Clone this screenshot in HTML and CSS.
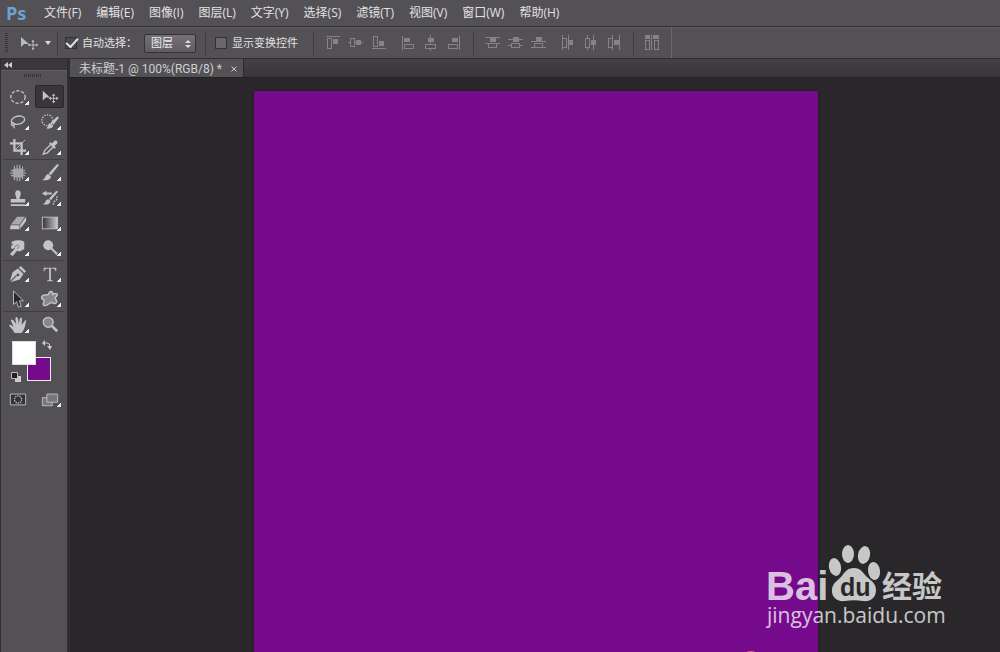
FILE: index.html
```html
<!DOCTYPE html>
<html lang="zh-CN">
<head>
<meta charset="utf-8">
<title>未标题-1</title>
<link rel="stylesheet" href="styles.css">
</head>
<body>
<div class="app">
  <header class="menubar">
    <div class="logo">Ps</div>
    <nav class="menus">
      <button class="menu">文件(F)</button>
      <button class="menu">编辑(E)</button>
      <button class="menu">图像(I)</button>
      <button class="menu">图层(L)</button>
      <button class="menu">文字(Y)</button>
      <button class="menu">选择(S)</button>
      <button class="menu">滤镜(T)</button>
      <button class="menu">视图(V)</button>
      <button class="menu">窗口(W)</button>
      <button class="menu">帮助(H)</button>
    </nav>
  </header>

  <div class="options">
    <span class="grip"></span>
    <button class="preset" aria-label="移动工具预设">
      <svg width="18" height="14" viewBox="0 0 18 14"><path d="M1 1v10l3-3h5z" fill="#bbb"/><path d="M13 4v10M8 9h10" stroke="#bbb"/><path d="M11.500 6 13 4l1.500 2zM11.500 12l1.500 2 1.500-2zM10 7.500 8 9l2 1.500zM16 7.500 18 9l-2 1.500z" fill="#bbb"/></svg>
      <svg width="6" height="4" viewBox="0 0 6 4"><path d="M0 0h6L3 4z" fill="#ddd"/></svg>
    </button>
    <div class="field field-auto">
      <input type="checkbox" class="check" id="auto" checked>
      <label for="auto">自动选择：</label>
      <span class="picker">
        <select class="select" aria-label="自动选择对象"><option>图层</option><option>组</option></select>
        <svg class="arrows" width="6" height="8" viewBox="0 0 6 8"><path d="M0 3h6L3 0zM0 5h6L3 8z" fill="#ddd"/></svg>
      </span>
    </div>
    <div class="field field-transform">
      <input type="checkbox" class="check" id="transform">
      <label for="transform">显示变换控件</label>
    </div>
    <div class="aligns">
      <div class="trio">
        <button class="align" aria-label="顶对齐"><svg viewBox="0 0 16 16"><path d="M1 1.500h14"/><path d="M2.500 3.500h4v10h-4z"/><path class="solid" d="M8 4h5v5H8z"/></svg></button>
        <button class="align" aria-label="垂直居中对齐"><svg viewBox="0 0 16 16"><path d="M0 7.500h2M6 7.500h9"/><path d="M2.500 3.500h4v8h-4z"/><path class="solid" d="M8 5h5v5H8z"/></svg></button>
        <button class="align" aria-label="底对齐"><svg viewBox="0 0 16 16"><path d="M1 13.500h14"/><path d="M2.500 1.500h4v10h-4z"/><path class="solid" d="M8 6h5v5H8z"/></svg></button>
      </div>
      <div class="trio">
        <button class="align" aria-label="左对齐"><svg viewBox="0 0 16 16"><path d="M2.500 1v14"/><path d="M4.500 9.500h9v4h-9z"/><path class="solid" d="M4 3h6v4H4z"/></svg></button>
        <button class="align" aria-label="水平居中对齐"><svg viewBox="0 0 16 16"><path d="M7.500 0v9M7.500 13v3"/><path d="M2.500 9.500h10v4h-10z"/><path class="solid" d="M5 3h6v4H5z"/></svg></button>
        <button class="align" aria-label="右对齐"><svg viewBox="0 0 16 16"><path d="M13.500 1v14"/><path d="M2.500 9.500h9v4h-9z"/><path class="solid" d="M6 3h6v4H6z"/></svg></button>
      </div>
    </div>
    <div class="aligns">
      <div class="trio">
        <button class="align" aria-label="按顶分布"><svg viewBox="0 0 16 16"><path d="M0 2.500h15M0 8.500h15"/><path class="solid" d="M5 3h6v4H5z"/><path d="M3.500 8.500h8v4h-8z"/></svg></button>
        <button class="align" aria-label="垂直居中分布"><svg viewBox="0 0 16 16"><path d="M0 4.500h15M0 10.500h3M12 10.500h3"/><path class="solid" d="M5 2h6v5H5z"/><path d="M3.500 8.500h8v4h-8z"/></svg></button>
        <button class="align" aria-label="按底分布"><svg viewBox="0 0 16 16"><path d="M0 6.500h15M0 12.500h15"/><path class="solid" d="M5 2h6v4H5z"/><path d="M3.500 8.500h8v4h-8z"/></svg></button>
      </div>
      <div class="trio">
        <button class="align" aria-label="按左分布"><svg viewBox="0 0 16 16"><path d="M2.500 0v15M8.500 0v15"/><path d="M2.500 3.500h4v9h-4z"/><path class="solid" d="M9 5h4v5H9z"/></svg></button>
        <button class="align" aria-label="水平居中分布"><svg viewBox="0 0 16 16"><path d="M4.500 0v3M4.500 13v2M10.500 0v15"/><path d="M2.500 3.500h4v9h-4z"/><path class="solid" d="M8 5h5v5H8z"/></svg></button>
        <button class="align" aria-label="按右分布"><svg viewBox="0 0 16 16"><path d="M6.500 0v15M13.500 0v15"/><path d="M2.500 3.500h4v9h-4z"/><path class="solid" d="M8 5h5v5H8z"/></svg></button>
      </div>
    </div>
    <div class="aligns aligns-last">
      <button class="align" aria-label="自动对齐图层"><svg viewBox="0 0 16 16"><path d="M7.500 0v15"/><path d="M1.500 5.500h4v9h-4zM10.500 5.500h4v9h-4z"/><path class="solid" d="M1 0h5v4H1zM9 0h6v4H9z"/></svg></button>
    </div>
  </div>

  <div class="workspace">
    <aside class="dock">
      <button class="collapse" aria-label="折叠面板"><svg width="8" height="6" viewBox="0 0 8 6"><path d="M4 0v6L0 3zM8 0v6L4 3z" fill="#ccc"/></svg></button>
      <div class="panel">
        <span class="handle"></span>
        <div class="group">
          <button class="tool" aria-label="椭圆选框"><svg viewBox="0 0 20 20"><ellipse cx="10" cy="10" rx="8" ry="7" class="line" stroke-dasharray="3.500 2"/></svg></button>
          <button class="tool active" aria-label="移动"><svg viewBox="0 0 20 20"><path d="M2 3v11l3.500-3.500H10z" class="fill"/><path d="M14 7v9M9.500 11.500h9" stroke="#c4c4c4"/><path d="M12 8.500 14 6l2 2.500zM12 14.500l2 2.500 2-2.500zM11 9.500l-2.500 2L11 13.500zM17 9.500l2.500 2-2.500 2z" class="fill"/></svg></button>
          <button class="tool" aria-label="套索"><svg viewBox="0 0 20 20"><ellipse cx="10" cy="8" rx="7.500" ry="4.500" class="line" transform="rotate(-12 10 8)"/><path d="M5 11c-3 0-3 3-1 3s2-2 1-3zM5 13l1 4" class="line"/></svg></button>
          <button class="tool" aria-label="快速选择"><svg viewBox="0 0 20 20"><circle cx="7" cy="8" r="6" class="line" stroke-dasharray="1.500 1.500"/><path d="M20 5 14 13l-3-2.500L18 4zM10 11l3.500 3c0 3-4 4-8 3 3-1 2-5 4.500-6z" class="fill"/></svg></button>
          <button class="tool" aria-label="裁剪"><svg viewBox="0 0 20 20"><path d="M6 1v13h13M1 6h13v13" fill="none" stroke="#c4c4c4" stroke-width="2.500"/><path d="M6 14 18 2" stroke="#c4c4c4"/></svg></button>
          <button class="tool" aria-label="吸管"><svg viewBox="0 0 20 20"><path d="m11 7-7 7-1.500 4L7 16.500l7-7" class="line"/><path d="m9 6 6 6 1.500-1.500L15 9l3-3c1-2-1-4-3-3l-3 3-1.500-1.500z" class="fill"/></svg></button>
        </div>
        <div class="group">
          <button class="tool" aria-label="污点修复"><svg viewBox="0 0 20 20"><path d="M6 2v16M9 1v18M12 1v18M15 3v14M2 7h16M1 10h18M2 13h16" stroke="#c4c4c4"/><rect x="4" y="5" width="12" height="10" rx="3" fill="#a4a4a4"/></svg></button>
          <button class="tool" aria-label="画笔"><svg viewBox="0 0 20 20"><path d="M20 1 11 12.500l-2.500-2L18 0zM8 11l3 2.500c0 4-5 5-10 4.500 4-1 3-6 7-7z" class="fill"/></svg></button>
          <button class="tool" aria-label="仿制图章"><svg viewBox="0 0 20 20"><path d="M7 6c-1-6 7-6 6 0l-1.500 5H18v4H2v-4h6.500zM2 17h16v2H2z" class="fill"/></svg></button>
          <button class="tool" aria-label="历史记录画笔"><svg viewBox="0 0 20 20"><path d="M19 3 11 12.500l-2-2L17 2zM8 11l2.500 2c0 4-4 5-9 4 4-1 3-5 6.500-6zM1 5l5-3v2h6v2H6v2z" class="fill"/><path d="M18 8c-1 2 1 3-2 5s-1 3-3 4" class="line" stroke-dasharray="2 1"/></svg></button>
          <button class="tool" aria-label="橡皮擦"><svg viewBox="0 0 20 20"><path d="M9 3h9l-6 9H2z" fill="#aaa"/><path d="M2 12h10v5H1zM19 3v5l-7 9v-5z" class="fill"/><path d="M2 12h10l6-9M12 12v5" fill="none" stroke="#666"/></svg></button>
          <button class="tool" aria-label="渐变"><svg viewBox="0 0 20 20"><defs><linearGradient id="ramp"><stop stop-color="#333"/><stop offset="1" stop-color="#ccc"/></linearGradient></defs><rect x="1.500" y="3.500" width="17" height="13" fill="url(#ramp)" stroke="#c4c4c4"/></svg></button>
          <button class="tool" aria-label="涂抹"><svg viewBox="0 0 20 20"><path d="M3 3c5-2 10-2 14 0v8l-5 3-3-1-5 6-3-2 6-7-4 1-1-3 4-3-3 1z" class="fill"/><path d="m6 9 5-3M9 11l3-3" stroke="#777"/></svg></button>
          <button class="tool" aria-label="减淡"><svg viewBox="0 0 20 20"><circle cx="8" cy="7" r="5.500" class="fill"/><path d="m11 10 7 7" stroke="#c4c4c4" stroke-width="2.500"/></svg></button>
        </div>
        <div class="group">
          <button class="tool" aria-label="钢笔"><svg viewBox="0 0 20 20"><path d="m13 1 6 6-2 2-6-6zM10 4l6 6-4 6-10 3 7-7-1-1-7 7 3-10z" class="fill"/><circle cx="10" cy="11" r="1.500" fill="#555"/></svg></button>
          <button class="tool" aria-label="文字"><svg viewBox="0 0 20 20"><path d="M3 3h14v4h-1c0-2-1-3-5-3v12c0 1 1 1 2 1v1H7v-1c1 0 2 0 2-1V4C5 4 4 5 4 7H3z" class="fill"/></svg></button>
          <button class="tool" aria-label="路径选择"><svg viewBox="0 0 20 20"><path d="M5 1v15l3.500-3 2 6 3-1-2-6H16z" fill="#292929" stroke="#c4c4c4"/></svg></button>
          <button class="tool" aria-label="自定形状"><svg viewBox="0 0 20 20"><path d="M8 5c2-5 5-4 5 0 3-2 6-1 5 1s-3 2-2 4c3 3 1 7-4 4-2-1-5 5-9 3-2-2 2-5 0-6s-3-2-2-4 4-1 7-2z" fill="#888" stroke="#c4c4c4" stroke-width="1.500"/></svg></button>
        </div>
        <div class="group group-last">
          <button class="tool" aria-label="抓手"><svg viewBox="0 0 20 20"><path d="M6 19c-1-4-5-6-6-9 2-1 3 1 5 2L2 5c1-2 2-1 3 0l3 4-1-6c1-3 2-2 3 0l1 6 1-6c1-2 3-1 2.500 0L14 10l3-4c1-2 3-1 2 0-1 5-2 9-5 13z" class="fill"/></svg></button>
          <button class="tool single" aria-label="缩放"><svg viewBox="0 0 20 20"><circle cx="8" cy="7" r="5.500" fill="#888" stroke="#c4c4c4" stroke-width="1.500"/><path d="m12 11 6 6" stroke="#c4c4c4" stroke-width="3"/></svg></button>
        </div>
        <div class="colors">
          <button class="swatch back" aria-label="背景色"></button>
          <button class="swatch front" aria-label="前景色"></button>
          <button class="swap" aria-label="切换颜色"><svg width="10" height="10" viewBox="0 0 10 10"><path d="M2 3h3q3 0 3 4" fill="none" stroke="#ccc"/><path d="M0 3l3-3v6zM5 6h5L8 10z" fill="#ccc"/></svg></button>
          <button class="reset" aria-label="默认颜色"><svg width="10" height="10" viewBox="0 0 10 10"><path d="M4 4h6v6H4z" fill="#ccc"/><path d="M.5.5h6v6h-6z" fill="#222" stroke="#bbb"/></svg></button>
        </div>
        <div class="modes">
          <button class="tool single" aria-label="快速蒙版"><svg viewBox="0 0 20 20"><path d="M1.500 4.500h17v12h-17z" fill="#333" stroke="#c4c4c4"/><circle cx="10" cy="10.500" r="4" class="line" stroke-dasharray="1.500 1"/></svg></button>
          <button class="tool" aria-label="屏幕模式"><svg viewBox="0 0 20 20"><path d="M1.500 8.500h11v9h-11z" fill="#777" stroke="#c4c4c4"/><path d="M6.500 4.500h12v9h-12z" fill="#777" stroke="#c4c4c4"/></svg></button>
        </div>
      </div>
    </aside>

    <main class="document">
      <div class="tabs">
        <div class="tab"><span>未标题-1 @ 100%(RGB/8) *</span><button class="close" aria-label="关闭"><svg width="6" height="6" viewBox="0 0 6 6"><path d="m.5.5 5 5M5.500.5l-5 5" stroke="#ccc"/></svg></button></div>
      </div>
      <div class="stage">
        <div class="canvas"><span class="blob"></span></div>
      </div>
    </main>

    <svg class="watermark" width="182" height="90" viewBox="0 0 182 90" role="img" aria-label="Baidu 经验">
      <g fill="#fff">
        <text x="0" y="57" class="wm-bai">Bai</text>
        <ellipse cx="69" cy="24" rx="6" ry="9" transform="rotate(-12 69 24)"/>
        <ellipse cx="82" cy="11" rx="6" ry="9"/>
        <ellipse cx="98" cy="12" rx="6" ry="9" transform="rotate(12 98 12)"/>
        <ellipse cx="108" cy="28" rx="6" ry="9" transform="rotate(-8 108 28)"/>
        <path d="M88 25c7 0 9 5 13 9 5 4 9 7 9 13 0 8-6 12-13 11-6-1-12-1-18 0-8 1-14-4-13-12 1-6 5-8 9-12 4-5 6-9 13-9z"/>
        <text x="116" y="54" class="wm-cn">经验</text>
        <text x="1" y="80" class="wm-url">jingyan.baidu.com</text>
      </g>
      <text x="74" y="53" class="wm-du">du</text>
    </svg>
  </div>
</div>
</body>
</html>
```
FILE: styles.css
```css
* { box-sizing: border-box; }

body {
  margin: 0;
  background: #29272a;
  color: #e2e2e2;
  font: 12px/16px "Open Sans", "Noto Sans CJK SC", sans-serif;
}

button {
  margin: 0;
  padding: 0;
  border: 0;
  background: none;
  color: inherit;
  font: inherit;
}

svg { display: block; }

.app {
  display: flex;
  flex-direction: column;
  height: 100vh;
  overflow: hidden;
}

.menubar {
  display: flex;
  align-items: center;
  height: 27px;
  padding-left: 6px;
  background: #535155;
  border-bottom: 1px solid #302e31;
}

.logo {
  width: 38px;
  color: #6ea0d0;
  font: bold 18px/24px "Open Sans", sans-serif;
}

.menus { display: flex; gap: 15px; }
.menu { white-space: nowrap; }

.options {
  display: flex;
  align-items: center;
  height: 32px;
  padding-left: 5px;
  background: #535155;
  border-top: 1px solid #5f5d61;
  border-bottom: 1px solid #302e31;
  font-size: 11px;
}

.grip {
  width: 3px;
  height: 20px;
  background: repeating-linear-gradient(#38363a 0 1px, #535155 1px 2px);
}

.preset {
  display: flex;
  align-items: center;
  gap: 7px;
  padding-left: 12px;
}

.field {
  display: flex;
  align-items: center;
  height: 24px;
  gap: 5px;
  white-space: nowrap;
  border-left: 1px solid #3f3d41;
}

.field-auto { margin-left: 6px; padding: 0 9px 0 7px; }
.field-auto label { width: 57px; }
.field-transform { padding: 0 15px 0 9px; }

.check {
  appearance: none;
  width: 12px;
  height: 12px;
  margin: 0;
  border: 1px solid #343236;
  background: #68666a;
}

.check:checked {
  background: #4b494d;
  display: grid;
  place-items: center;
}

.check:checked::after {
  content: "";
  width: 10px;
  height: 5px;
  margin-bottom: 5px;
  border: solid #e4e4e4;
  border-width: 0 0 2px 2px;
  transform: rotate(-48deg);
}

.picker { position: relative; }

.select {
  appearance: none;
  display: block;
  width: 52px;
  height: 19px;
  padding: 0 6px;
  border: 1px solid #343236;
  border-radius: 2px;
  background: linear-gradient(#737175, #5f5d61);
  color: #eee;
  font: inherit;
}

.arrows { position: absolute; right: 5px; top: 6px; }

.aligns {
  display: flex;
  align-items: center;
  gap: 13px;
  height: 24px;
  padding: 0 11px;
  border-left: 1px solid #3f3d41;
}

.aligns-last {
  height: 30px;
  border-left: 0;
  border-right: 1px solid #69676b;
  background: linear-gradient(#3f3d41, #3f3d41) left center / 1px 24px no-repeat;
}

.trio { display: flex; gap: 7px; }
.align svg { width: 16px; height: 16px; shape-rendering: crispEdges; }
.align path { fill: none; stroke: #858387; }
.align .solid { fill: #858387; stroke: none; }

.workspace {
  position: relative;
  display: flex;
  flex: 1;
  min-height: 0;
}

.dock {
  display: flex;
  flex-direction: column;
  width: 70px;
  padding: 0 3px 0 1px;
  background: #302e31;
}

.collapse { height: 11px; padding-left: 3px; background: #39373a; }

.panel {
  flex: 1;
  padding: 3px 3px 0 2px;
  background: #535155;
  border-top: 1px solid #626064;
}

.handle {
  display: block;
  width: 18px;
  height: 3px;
  margin: 0 auto 7px 21px;
  background: repeating-linear-gradient(90deg, #353337 0 1px, #535155 1px 2px);
}

.group, .modes {
  display: grid;
  grid-template-columns: 29px 29px;
  gap: 2px 3px;
  padding: 1px 0;
  border-bottom: 1px solid #3f3d41;
}

.group-last, .modes { border: 0; }

.tool {
  position: relative;
  display: grid;
  place-items: center;
  height: 23px;
}

.tool svg { width: 18px; height: 18px; }
.fill { fill: #c4c4c4; }
.line { fill: none; stroke: #c4c4c4; stroke-width: 1.5; }

.tool::after {
  content: "";
  position: absolute;
  right: 3px;
  bottom: 3px;
  width: 4px;
  height: 4px;
  background: linear-gradient(135deg, transparent 50%, #eee 50%);
}

.tool.active {
  background: #38363a;
  border: 1px solid #29272a;
  border-radius: 2px;
}

.tool.active::after, .tool.single::after { display: none; }

.colors { position: relative; height: 49px; }
.colors button { position: absolute; }
.swatch { width: 24px; height: 24px; }
.front { left: 9px; top: 4px; background: #fff; border: 1px solid #ddd; }
.back { left: 24px; top: 20px; background: #750a8c; border: 1px solid #eee; }
.swap { left: 39px; top: 3px; }
.reset { left: 8px; top: 35px; }

.document {
  display: flex;
  flex: 1;
  flex-direction: column;
  min-width: 0;
}

.tabs {
  display: flex;
  height: 19px;
  background: linear-gradient(#434145, #38363a);
  border-bottom: 1px solid #232124;
}

.tab {
  display: flex;
  align-items: center;
  gap: 9px;
  padding: 1px 6px 0 9px;
  background: #535155;
  border-right: 1px solid #2b292c;
  color: #d0d0d0;
  font-family: Roboto, "Noto Sans CJK SC", sans-serif;
  white-space: nowrap;
}

.stage {
  display: flex;
  flex: 1;
  justify-content: center;
  padding: 13px 0 0 2px;
}

.canvas {
  position: relative;
  width: 564px;
  max-width: 90%;
  background: #750a8c;
  box-shadow: 0 0 2px #151316;
  overflow: hidden;
}

.blob {
  position: absolute;
  right: 60px;
  bottom: -7px;
  width: 14px;
  height: 8px;
  border-radius: 50%;
  background: #e8607c;
}

.watermark { position: absolute; right: 52px; bottom: 19px; }
.watermark g { opacity: 0.74; }
.wm-bai { font: bold 40px "Liberation Sans", sans-serif; }
.wm-du { font: bold 25px "Liberation Sans", sans-serif; fill: #29272a; }
.wm-cn { font: bold 30px "Noto Sans CJK SC", sans-serif; }
.wm-url { font: 21px "Open Sans", sans-serif; }
```
